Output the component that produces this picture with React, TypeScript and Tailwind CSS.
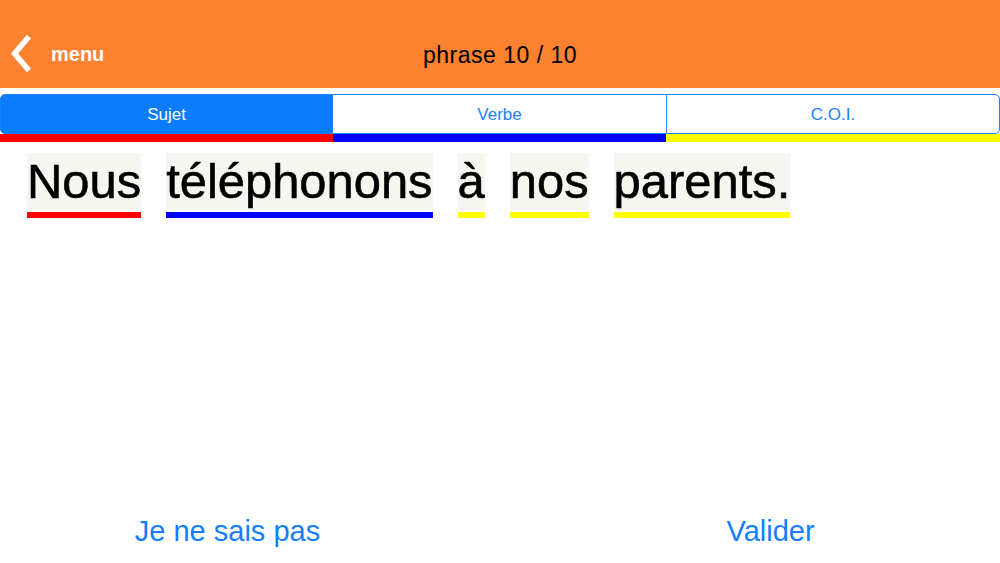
import React from "react";

const words: { text: string; color: string }[] = [
  { text: "Nous", color: "bg-[#ff0000]" },
  { text: "téléphonons", color: "bg-[#0000ff]" },
  { text: "à", color: "bg-[#ffff00]" },
  { text: "nos", color: "bg-[#ffff00]" },
  { text: "parents.", color: "bg-[#ffff00]" },
];

export default function App() {
  return (
    <div
      className="w-[1000px] h-[563px] bg-white flex flex-col overflow-hidden"
      style={{ fontFamily: '"Liberation Sans", Arial, sans-serif' }}
    >
      {/* Header */}
      <div className="h-[88px] pt-[20px] bg-[#fa8230] grid grid-cols-[1fr_auto_1fr] items-center">
        <div className="flex items-center">
          <svg width="40" height="40" viewBox="0 0 40 40" className="ml-[2px]">
            <polyline
              points="27,2.5 12.5,19.5 27,36.5"
              fill="none"
              stroke="white"
              strokeWidth="5.5"
              strokeLinecap="butt"
              strokeLinejoin="miter"
            />
          </svg>
          <span className="ml-[9px] text-white font-bold text-[20px] leading-none mb-[1px]">menu</span>
        </div>
        <div className="text-black text-[23px] tracking-[0.5px] leading-none mt-[3px]">phrase 10 / 10</div>
        <div />
      </div>

      {/* Segmented control */}
      <div className="mt-[6px] h-[40px] flex text-[17px]">
        <div className="w-[333px] pt-[2px] bg-[#0a7cff] rounded-l-[5px] border border-[#1a82fb] flex items-center justify-center text-white">
          Sujet
        </div>
        <div className="w-[333px] pt-[2px] border-y border-[#1a82fb] flex items-center justify-center text-[#1a82fb]">
          Verbe
        </div>
        <div className="flex-1 pt-[2px] rounded-r-[5px] border border-[#1a82fb] flex items-center justify-center text-[#1a82fb]">
          C.O.I.
        </div>
      </div>

      {/* Color bars */}
      <div className="h-[8px] flex">
        <div className="w-[333px] bg-[#ff0000]" />
        <div className="w-[333px] bg-[#0000ff]" />
        <div className="flex-1 bg-[#ffff00]" />
      </div>

      {/* Words */}
      <div className="mt-[11px] pl-[27px] flex gap-[25px]">
        {words.map((w) => (
          <div key={w.text} className="flex flex-col">
            <span className="bg-[#f6f6f0] text-black text-[48.9px] h-[57px] leading-[57px] [-webkit-text-stroke:0.6px_black]">
              {w.text}
            </span>
            <div className={`mt-[2px] h-[6px] ${w.color}`} />
          </div>
        ))}
      </div>

      {/* Bottom buttons */}
      <div className="mt-auto mb-[15px] h-[33px] flex text-[#147efb] text-[29px] leading-[33px]">
        <div className="w-[455px] text-center">Je ne sais pas</div>
        <div className="w-[86px]" />
        <div className="flex-1 text-center">Valider</div>
      </div>
    </div>
  );
}
